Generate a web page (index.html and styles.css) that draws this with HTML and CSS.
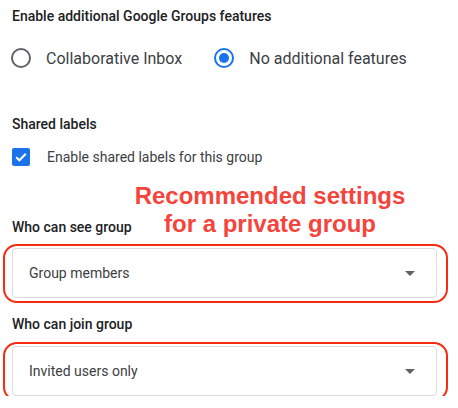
FILE: index.html
```html
<!DOCTYPE html>
<html lang="en">
<head>
    <meta charset="UTF-8">
    <meta name="viewport" content="width=device-width, initial-scale=1.0">
    <title>Group settings</title>
    <link rel="stylesheet" href="styles.css">
</head>
<body>
    <div class="settings">
        <div class="heading first">Enable additional Google Groups features</div>
        <div class="radio-row">
            <label class="radio-item">
                <span class="radio"></span>
                <span>Collaborative Inbox</span>
            </label>
            <label class="radio-item">
                <span class="radio checked"></span>
                <span>No additional features</span>
            </label>
        </div>

        <div class="heading shared">Shared labels</div>
        <label class="check-row">
            <span class="checkbox">
                <svg width="14" height="14" viewBox="0 0 14 14"><path d="M2.2 7.2 L5.4 10.3 L11.8 3.8" fill="none" stroke="#fff" stroke-width="2"/></svg>
            </span>
            <span>Enable shared labels for this group</span>
        </label>

        <div class="note">Recommended settings<br>for a private group</div>

        <div class="heading see">Who can see group</div>
        <div class="select highlight">
            <span>Group members</span>
            <span class="arrow"></span>
        </div>

        <div class="heading join">Who can join group</div>
        <div class="select highlight">
            <span>Invited users only</span>
            <span class="arrow"></span>
        </div>
    </div>
</body>
</html>
```

FILE: styles.css
```css
body {
    margin: 0;
    background: #fff;
    color: #3c4043;
    font-family: Roboto, "Liberation Sans", Arial, sans-serif;
}
.settings {
    position: relative;
    padding: 0 21px 0 12px;
}
.heading {
    font-size: 14px;
    font-weight: 500;
    line-height: 20px;
    color: #202124;
}
.heading.first { margin-top: 6px; }
.heading.shared { margin-top: 46px; }
.heading.see { margin-top: 50px; }
.heading.join { margin-top: 16px; }

.radio-row {
    display: flex;
    gap: 33px;
    margin-top: 22px;
    height: 20px;
}
.radio-item {
    display: flex;
    align-items: center;
    gap: 15px;
    font-size: 16px;
    color: #3c4043;
    margin-left: -1px;
}
.radio {
    width: 20px;
    height: 20px;
    box-sizing: border-box;
    border: 2px solid #5f6368;
    border-radius: 50%;
    display: flex;
    align-items: center;
    justify-content: center;
}
.radio.checked { border-color: #1a73e8; }
.radio.checked::after {
    content: "";
    width: 10px;
    height: 10px;
    border-radius: 50%;
    background: #1a73e8;
}

.check-row {
    display: flex;
    align-items: center;
    gap: 17px;
    margin-top: 13px;
    font-size: 14px;
    height: 20px;
}
.checkbox {
    width: 18px;
    height: 18px;
    border-radius: 2px;
    background: #1a73e8;
    display: flex;
    align-items: center;
    justify-content: center;
}

.note {
    position: absolute;
    top: 176px;
    left: 120px;
    width: 300px;
    text-align: center;
    font-family: "Liberation Sans", Arial, sans-serif;
    font-weight: bold;
    font-size: 24px;
    line-height: 28px;
    color: #f5443c;
}

.select {
    position: relative;
    display: flex;
    align-items: center;
    justify-content: space-between;
    height: 50px;
    box-sizing: border-box;
    margin-top: 11px;
    padding: 0 21px 0 16px;
    border: 1px solid #dadce0;
    border-radius: 4px;
    font-size: 14px;
    color: #3c4043;
}
.heading.join + .select { margin-top: 12px; }
.arrow {
    width: 0;
    height: 0;
    border-left: 5px solid transparent;
    border-right: 5px solid transparent;
    border-top: 5px solid #5f6368;
}
.highlight::after {
    content: "";
    position: absolute;
    top: -5px;
    bottom: -6px;
    left: -10px;
    right: -12px;
    border: 2px solid #f52c10;
    border-radius: 14px;
}
```
